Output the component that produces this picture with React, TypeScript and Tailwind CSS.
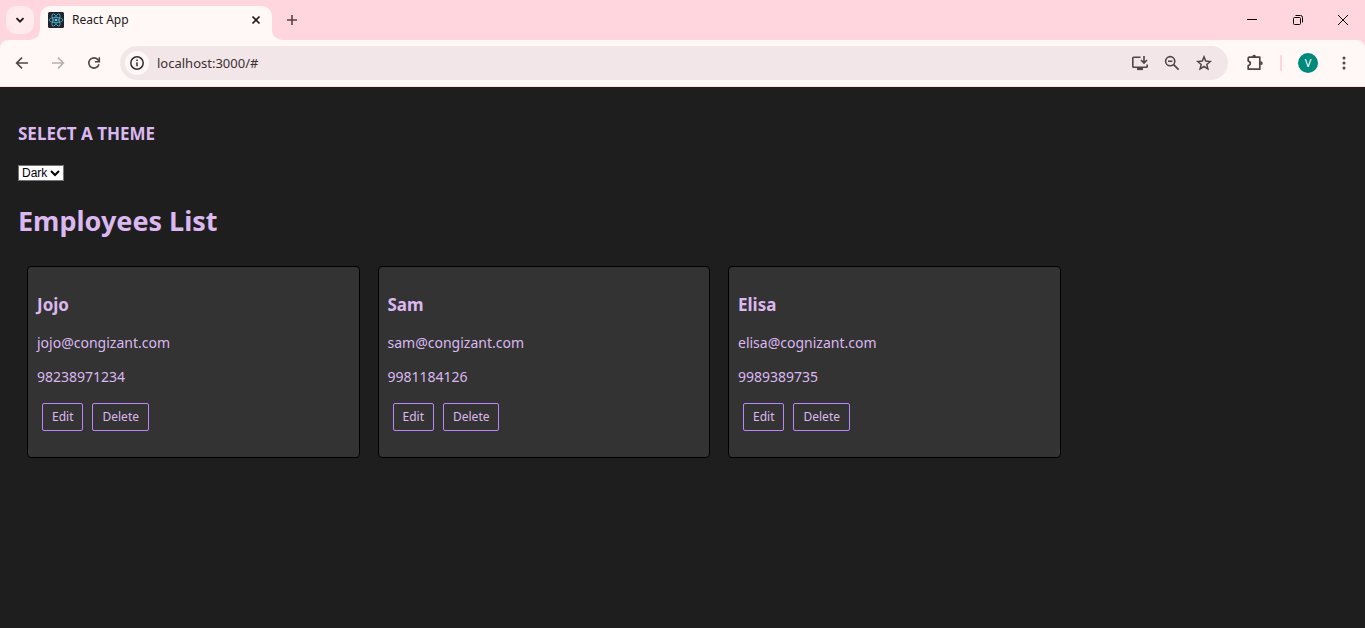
import { useState } from "react";
import type { ReactNode } from "react";

type Employee = { name: string; email: string; phone: string };

const employees: Employee[] = [
  { name: "Jojo", email: "jojo@congizant.com", phone: "98238971234" },
  { name: "Sam", email: "sam@congizant.com", phone: "9981184126" },
  { name: "Elisa", email: "elisa@cognizant.com", phone: "9989389735" },
];

function Icon({ children, className = "", size = 16 }: { children: ReactNode; className?: string; size?: number }) {
  return (
    <svg
      width={size}
      height={size}
      viewBox={`0 0 ${size} ${size}`}
      fill="none"
      stroke="currentColor"
      strokeWidth="1.6"
      className={`shrink-0 ${className}`}
      aria-hidden="true"
    >
      {children}
    </svg>
  );
}

function ReactLogo() {
  return (
    <svg width="16" height="16" viewBox="0 0 16 16" fill="none" stroke="#4fb3cc" strokeWidth="0.8" className="shrink-0" aria-hidden="true">
      <rect width="16" height="16" rx="1.5" fill="#20232a" stroke="none" />
      <ellipse cx="8" cy="8" rx="6.8" ry="2.6" />
      <ellipse cx="8" cy="8" rx="6.8" ry="2.6" transform="rotate(60 8 8)" />
      <ellipse cx="8" cy="8" rx="6.8" ry="2.6" transform="rotate(120 8 8)" />
      <circle cx="8" cy="8" r="1.3" fill="#61dafb" stroke="none" />
    </svg>
  );
}

function TabStrip() {
  return (
    <div className="flex h-10 bg-[#ffd6de]">
      <button aria-label="Search tabs" className="mt-1.5 ml-1.5 flex size-7 items-center justify-center rounded-[10px] bg-[#ffebee] text-[#1f1a1b]">
        <Icon>
          <path d="m4.5 6.2 3.5 3.5 3.5-3.5" strokeWidth="1.9" />
        </Icon>
      </button>
      <div className="relative mt-1.5 ml-1.5 flex w-58 items-center rounded-t-[10px] bg-[#fff8f7] pr-2 pb-1.5 pl-2">
        <svg width="10" height="10" className="absolute bottom-0 -left-2.5" aria-hidden="true">
          <path d="M10 0v10H0A10 10 0 0 0 10 0Z" fill="#fff8f7" />
        </svg>
        <svg width="10" height="10" className="absolute -right-2.5 bottom-0" aria-hidden="true">
          <path d="M0 0v10h10A10 10 0 0 1 0 0Z" fill="#fff8f7" />
        </svg>
        <ReactLogo />
        <span className="ml-2 flex-1 text-[12px] leading-4 text-[#231919]">React App</span>
        <button aria-label="Close tab" className="text-[#1f1a1b]">
          <Icon>
            <path d="m4.5 4.5 7 7m0-7-7 7" strokeWidth="1.7" />
          </Icon>
        </button>
      </div>
      <button aria-label="New tab" className="ml-3 flex w-4 items-center justify-center text-[#534346]">
        <Icon>
          <path d="M8 3v10M3 8h10" />
        </Icon>
      </button>
      <div className="ml-auto flex text-black">
        <button aria-label="Minimize" className="flex w-[46px] items-center justify-center">
          <Icon>
            <path d="M3 7.5h10" strokeWidth="1" />
          </Icon>
        </button>
        <button aria-label="Restore" className="flex w-[46px] items-center justify-center">
          <Icon>
            <rect x="3.5" y="5.5" width="7" height="7" rx="1" strokeWidth="1" />
            <path d="M5.5 3.5h5a2 2 0 0 1 2 2v5" strokeWidth="1" />
          </Icon>
        </button>
        <button aria-label="Close" className="flex w-11 items-center justify-center">
          <Icon>
            <path d="m3 3 10 10m0-10L3 13" strokeWidth="1" />
          </Icon>
        </button>
      </div>
    </div>
  );
}

function Toolbar() {
  return (
    <div className="bg-[#ffd6de]">
      <div className="flex h-[47px] items-center rounded-t-lg border-b border-[#ffe0e4] bg-[#fff8f7] pr-[13px] pl-3.5 text-[#534346]">
        <div className="flex gap-5">
          <button aria-label="Back">
            <Icon>
              <path d="M14 8H3M8 2.6 2.6 8 8 13.4" />
            </Icon>
          </button>
          <button aria-label="Forward" disabled className="text-[#b9afb0]">
            <Icon>
              <path d="M2 8h11M8 2.6 13.4 8 8 13.4" />
            </Icon>
          </button>
          <button aria-label="Reload">
            <Icon>
              <path d="M12.9 9.2A5.1 5.1 0 1 1 11.8 4.6l1.4 1.5" />
              <path d="M13.3 2.2v4.5H8.9" />
            </Icon>
          </button>
        </div>
        <div className="ml-[18px] flex h-[34px] flex-1 items-center rounded-full bg-[#f2e6e9] pr-4 pl-[5px]">
          <button aria-label="Site information" className="flex size-6 items-center justify-center rounded-full bg-[#fff8f7] text-[#352c2e]">
            <Icon>
              <circle cx="8" cy="8" r="6.2" strokeWidth="1.5" />
              <path d="M8 7.2v4M8 4.4V6" strokeWidth="1.5" />
            </Icon>
          </button>
          <input
            aria-label="Address"
            defaultValue="localhost:3000/#"
            className="ml-2 min-w-0 flex-1 bg-transparent text-[13px] leading-5 text-[#3b3032] outline-none"
          />
          <div className="flex gap-4">
            <button aria-label="Install app">
              <Icon>
                <path d="M8.5 2.3H1.6a.8.8 0 0 0-.8.8v8.3c0 .5.3.8.8.8h12.8c.5 0 .8-.3.8-.8V9.6" />
                <path d="M5 14h6" strokeWidth="2.2" />
                <path d="M12 1v6.5M9 5l3 3 3-3" />
              </Icon>
            </button>
            <button aria-label="Zoom">
              <Icon>
                <circle cx="6.2" cy="6.2" r="4.6" />
                <path d="m9.6 9.6 5 5M4 6.2h4.4" />
              </Icon>
            </button>
            <button aria-label="Bookmark this tab">
              <Icon>
                <path d="m8 1.9 1.7 4.2 4.6.4-3.5 3 1.1 4.4L8 11.5l-3.9 2.4 1.1-4.4-3.5-3 4.6-.4L8 1.9Z" strokeWidth="1.5" />
              </Icon>
            </button>
          </div>
        </div>
        <button aria-label="Extensions" className="ml-[18px]">
          <Icon size={18}>
            <path d="M3.2 3.2h10.6v12H2.2v-3.6c2.8-.5 2.8-4 0-4.5V4.2c0-.6.4-1 1-1Z" strokeWidth="1.7" strokeLinejoin="round" />
            <path d="M6.2 3V2.6a1.9 1.9 0 0 1 3.8 0V3zM14.2 7.3h.6a1.9 1.9 0 0 1 0 3.8h-.6z" fill="currentColor" stroke="none" />
          </Icon>
        </button>
        <span className="ml-4 h-4 w-0.5 rounded-full bg-[#ffd6de]" />
        <button aria-label="Profile" className="ml-4 flex size-5 items-center justify-center rounded-full bg-[#00897b] text-[11px] leading-5 text-white">
          V
        </button>
        <button aria-label="Browser menu" className="ml-[18px]">
          <Icon>
            <g fill="currentColor" stroke="none">
              <circle cx="8" cy="3" r="1.5" />
              <circle cx="8" cy="8" r="1.5" />
              <circle cx="8" cy="13" r="1.5" />
            </g>
          </Icon>
        </button>
      </div>
    </div>
  );
}

function ActionButton({ children }: { children: ReactNode }) {
  return (
    <button className="h-7 rounded-[2px] border border-[#bb86fc] px-[9px] text-[12px] leading-5">{children}</button>
  );
}

function EmployeeCard({ employee }: { employee: Employee }) {
  return (
    <article className="m-[9px] w-1/4 rounded border border-black bg-[#333333] px-[9px] py-[26px]">
      <h3 className="text-[17px] leading-6 font-bold">{employee.name}</h3>
      <p className="mt-4 text-[14px] leading-5">{employee.email}</p>
      <p className="mt-3.5 text-[14px] leading-5">{employee.phone}</p>
      <div className="mt-4 ml-[5px] flex gap-[9px]">
        <ActionButton>Edit</ActionButton>
        <ActionButton>Delete</ActionButton>
      </div>
    </article>
  );
}

export default function App() {
  const [theme, setTheme] = useState("Dark");
  return (
    <div className="flex min-h-screen flex-col bg-[#1e1e1e] font-['Segoe_UI','Noto_Sans',sans-serif]">
      <header>
        <TabStrip />
        <Toolbar />
      </header>
      <main className="flex-1 pt-[35px] pr-[17px] pl-[18px] text-[#dbb8f0]">
        <h3 className="text-[17px] leading-6 font-bold">
          <label htmlFor="theme">SELECT A THEME</label>
        </h3>
        <div className="relative mt-[19px] w-[46px]">
          <select
            id="theme"
            value={theme}
            onChange={(event) => setTheme(event.target.value)}
            className="block h-4 w-full appearance-none border border-[#767676] bg-white pl-[3px] font-['Liberation_Sans',sans-serif] text-[12px] leading-[14px] text-black"
          >
            <option>Dark</option>
            <option>Light</option>
          </select>
          <svg width="10" height="8" viewBox="0 0 10 8" fill="none" stroke="black" strokeWidth="2" className="pointer-events-none absolute top-1 right-1" aria-hidden="true">
            <path d="m1 2 4 4 4-4" />
          </svg>
        </div>
        <h1 className="mt-5 text-[27px] leading-10 font-bold">Employees List</h1>
        <section className="mt-4 flex" aria-label="Employees">
          {employees.map((employee) => (
            <EmployeeCard key={employee.email} employee={employee} />
          ))}
        </section>
      </main>
    </div>
  );
}
